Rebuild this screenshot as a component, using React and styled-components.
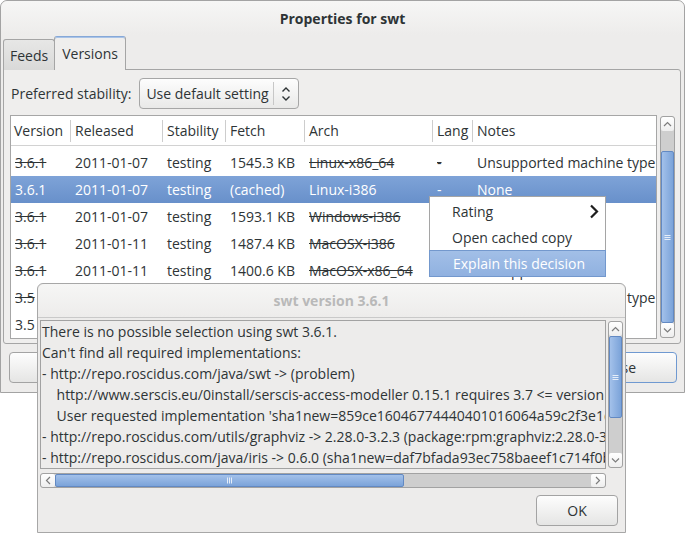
import React from 'react';
import styled, { createGlobalStyle } from 'styled-components';

const GlobalStyle = createGlobalStyle`
  html, body { margin: 0; padding: 0; background: #ffffff; }
  body {
    font-family: "Open Sans", "DejaVu Sans", sans-serif;
    font-size: 14px;
    color: #2e3436;
  }
  * { box-sizing: border-box; }
`;

const Desktop = styled.div`
  position: relative;
  width: 685px;
  height: 533px;
  overflow: hidden;
  background: #ffffff;
`;

/* ---------- main window ---------- */

const Window = styled.div`
  width: 685px;
  height: 393px;
  display: flex;
  flex-direction: column;
  background: #edeceb;
  border: 1px solid #a3a3a3;
  border-radius: 7px 7px 0 0;
`;

const TitleBar = styled.div`
  flex: none;
  height: 34px;
  display: flex;
  align-items: center;
  justify-content: center;
  font-weight: bold;
  color: ${(p) => (p.$inactive ? '#b9b9b9' : '#2e3436')};
  background: linear-gradient(#f6f6f5, #edeceb);
  border-radius: 7px 7px 0 0;
  border-bottom: ${(p) => (p.$inactive ? '1px solid #c9c9c9' : 'none')};
`;

const Notebook = styled.div`
  display: flex;
  flex-direction: column;
  margin: 0 3px 0 2px;
`;

const TabStrip = styled.div`
  display: flex;
  align-items: flex-end;
  height: 35px;
`;

const Tab = styled.div`
  position: relative;
  z-index: ${(p) => (p.$active ? 1 : 'auto')};
  height: ${(p) => (p.$active ? '34px' : '31px')};
  margin-left: ${(p) => (p.$active ? '-1px' : '0')};
  padding: 0 ${(p) => (p.$active ? '7px' : '6px')};
  display: flex;
  align-items: center;
  border: 1px solid #a5a5a5;
  border-bottom: none;
  border-radius: 3px 3px 0 0;
  background: ${(p) =>
    p.$active ? '#efeeed' : 'linear-gradient(#e7e7e6, #d9d9d8)'};
  border-top-color: ${(p) => (p.$active ? '#86a8d8' : '#a5a5a5')};
  box-shadow: ${(p) => (p.$active ? 'inset 0 1px 0 #a9c3e7' : 'none')};
`;

const Pane = styled.div`
  margin-top: -1px;
  height: 275px;
  display: flex;
  flex-direction: column;
  padding: 8px 5px 3px 6px;
  border: 1px solid #a5a5a5;
  border-radius: 0 3px 3px 3px;
  background: #efeeed;
`;

const StabilityRow = styled.div`
  display: flex;
  align-items: center;
  gap: 8px;
  height: 31px;
  padding-left: 1px;
`;

const Combo = styled.div`
  width: 160px;
  height: 31px;
  display: flex;
  align-items: center;
  border: 1px solid #a6a6a6;
  border-radius: 4px;
  background: linear-gradient(#fdfdfd, #e9e9e8);
`;

const ComboText = styled.span`
  flex: 1;
  padding-left: 6px;
  white-space: nowrap;
  overflow: hidden;
`;

const ComboSep = styled.span`
  width: 1px;
  height: 23px;
  background: #c7c7c7;
`;

const ComboArrows = styled.span`
  width: 24px;
  display: flex;
  align-items: center;
  justify-content: center;
`;

const TreeArea = styled.div`
  margin-top: 6px;
  height: 224px;
  display: flex;
  gap: 3px;
`;

const TreeBox = styled.div`
  flex: 1;
  border: 1px solid #a6a6a6;
  background: #ffffff;
  overflow: hidden;
`;

const GRID = '59px 92px 63px 79px 128px 40px 1fr';

const HeaderRow = styled.div`
  display: grid;
  grid-template-columns: ${GRID};
  height: 30px;
  padding: 4px 0 3px;
  border-bottom: 1px solid #d2d2d2;
`;

const HeaderCell = styled.div`
  line-height: 22px;
  padding-left: 4px;
  white-space: nowrap;
  overflow: hidden;
  border-left: 1px solid #cdcdcd;
  &:first-child { border-left: none; padding-left: 3px; }
`;

const Rows = styled.div`
  padding-top: 3px;
`;

const Row = styled.div`
  display: grid;
  grid-template-columns: ${GRID};
  height: 27px;
  align-items: center;
  color: ${(p) => (p.$selected ? '#ffffff' : '#2e3436')};
  background: ${(p) =>
    p.$selected ? 'linear-gradient(#7ea3d8, #6890ca)' : 'transparent'};
`;

const Cell = styled.div`
  padding-left: 5px;
  white-space: nowrap;
  overflow: hidden;
  text-decoration: ${(p) => (p.$strike ? 'line-through' : 'none')};
  &:first-child { padding-left: 4px; }
`;

const ButtonRow = styled.div`
  display: flex;
  justify-content: space-between;
  padding: 8px 7px 0 8px;
`;

const PushButton = styled.div`
  width: ${(p) => p.$width}px;
  height: 31px;
  display: flex;
  align-items: center;
  justify-content: center;
  border: 1px solid ${(p) => (p.$default ? '#6f99d1' : '#a3a3a3')};
  border-radius: 4px;
  background: linear-gradient(#fdfdfd, #e5e5e4);
`;

/* ---------- scrollbars ---------- */

const Track = styled.div`
  flex: none;
  display: flex;
  flex-direction: ${(p) => (p.$horizontal ? 'row' : 'column')};
  ${(p) => (p.$horizontal ? 'height: 15px;' : 'width: 15px; margin: 1px 0;')}
  border: 1px solid #a2a2a2;
  border-radius: 3px;
  background: #cecece;
  overflow: hidden;
`;

const Stepper = styled.div`
  flex: none;
  ${(p) => (p.$horizontal ? 'width: 14px;' : 'height: 14px;')}
  display: flex;
  align-items: center;
  justify-content: center;
  background: linear-gradient(#ffffff, #eeeeee);
  border-radius: 2px;
`;

const Trough = styled.div`
  flex: 1;
  display: flex;
  flex-direction: ${(p) => (p.$horizontal ? 'row' : 'column')};
`;

const Thumb = styled.div`
  flex: none;
  ${(p) =>
    p.$horizontal
      ? `margin-left: ${p.$offset}px; width: ${p.$size}px;`
      : `margin-top: ${p.$offset}px; height: ${p.$size}px;`}
  display: flex;
  align-items: center;
  justify-content: center;
  background: ${(p) =>
    p.$horizontal
      ? 'linear-gradient(#a3c1ea, #7ba3d9)'
      : 'linear-gradient(90deg, #a3c1ea, #7ba3d9)'};
  border: 1px solid #6289c3;
  border-radius: 2px;
`;

const arrowPoints = {
  up: '1,5 4.5,1.5 8,5',
  down: '1,1.5 4.5,5 8,1.5',
  left: '5,1 1.5,4.5 5,8',
  right: '1,1 4.5,4.5 1,8',
};

function Arrow({ dir }) {
  const vertical = dir === 'up' || dir === 'down';
  return (
    <svg width={vertical ? 9 : 6} height={vertical ? 6 : 9}>
      <polyline points={arrowPoints[dir]} fill="none" stroke="#7d7d7d" strokeWidth="1.2" />
    </svg>
  );
}

function Grip({ horizontal }) {
  return horizontal ? (
    <svg width="7" height="7">
      <path d="M1.5 0.5v6M3.5 0.5v6M5.5 0.5v6" stroke="#e6eef9" strokeWidth="1" />
    </svg>
  ) : (
    <svg width="7" height="7">
      <path d="M0.5 1.5h6M0.5 3.5h6M0.5 5.5h6" stroke="#e6eef9" strokeWidth="1" />
    </svg>
  );
}

function Scrollbar({ horizontal, offset, size }) {
  return (
    <Track $horizontal={horizontal}>
      <Stepper $horizontal={horizontal}>
        <Arrow dir={horizontal ? 'left' : 'up'} />
      </Stepper>
      <Trough $horizontal={horizontal}>
        <Thumb $horizontal={horizontal} $offset={offset} $size={size}>
          <Grip horizontal={horizontal} />
        </Thumb>
      </Trough>
      <Stepper $horizontal={horizontal}>
        <Arrow dir={horizontal ? 'right' : 'down'} />
      </Stepper>
    </Track>
  );
}

/* ---------- context menu ---------- */

const Menu = styled.div`
  position: absolute;
  left: 429px;
  top: 196px;
  width: 177px;
  padding-top: 1px;
  background: #ffffff;
  border: 1px solid #a5a5a5;
`;

const MenuItem = styled.div`
  height: 26px;
  display: flex;
  align-items: center;
  justify-content: space-between;
  padding: 0 6px 0 22px;
  color: ${(p) => (p.$hot ? '#ffffff' : '#2e3436')};
  ${(p) =>
    p.$hot &&
    `margin: 0 -1px -1px;
     padding-left: 23px;
     height: 27px;
     border: 1px solid #7398cd;
     background: linear-gradient(#a2bfe7, #90b1e0);`}
`;

/* ---------- dialog ---------- */

const Dialog = styled.div`
  position: absolute;
  left: 37px;
  top: 283px;
  width: 589px;
  height: 250px;
  display: flex;
  flex-direction: column;
  background: #edeceb;
  border: 1px solid #a7a7a7;
  border-radius: 6px 6px 0 0;
`;

const DialogBody = styled.div`
  display: grid;
  grid-template-columns: 566px 15px;
  grid-template-rows: 149px 15px;
  column-gap: 2px;
  row-gap: 4px;
  padding: 2px 0 0 2px;
`;

const TextBox = styled.div`
  border: 1px solid #a2a2a2;
  overflow: hidden;
  padding-left: 1px;
  line-height: 21px;
  white-space: pre;
`;

const DialogActions = styled.div`
  display: flex;
  justify-content: flex-end;
  padding: 7px 7px 0 0;
`;

/* ---------- data ---------- */

const columns = ['Version', 'Released', 'Stability', 'Fetch', 'Arch', 'Lang', 'Notes'];

const rows = [
  { v: '3.6.1', r: '2011-01-07', s: 'testing', f: '1545.3 KB', a: 'Linux-x86_64', n: 'Unsupported machine type', bad: true },
  { v: '3.6.1', r: '2011-01-07', s: 'testing', f: '(cached)', a: 'Linux-i386', n: 'None', selected: true },
  { v: '3.6.1', r: '2011-01-07', s: 'testing', f: '1593.1 KB', a: 'Windows-i386', n: 'Unsupported OS', bad: true },
  { v: '3.6.1', r: '2011-01-11', s: 'testing', f: '1487.4 KB', a: 'MacOSX-i386', n: 'Unsupported OS', bad: true },
  { v: '3.6.1', r: '2011-01-11', s: 'testing', f: '1400.6 KB', a: 'MacOSX-x86_64', n: 'Unsupported OS', bad: true },
  { v: '3.5', r: '2010-06-24', s: 'testing', f: '1502.8 KB', a: 'Linux-x86_64', n: 'Unsupported machine type', bad: true },
  { v: '3.5', r: '2010-06-24', s: 'testing', f: '1418.2 KB', a: 'Linux-i386', n: 'None' },
];

const explanation = [
  'There is no possible selection using swt 3.6.1.',
  "Can't find all required implementations:",
  '- http://repo.roscidus.com/java/swt -> (problem)',
  '    http://www.serscis.eu/0install/serscis-access-modeller 0.15.1 requires 3.7 <= version',
  "    User requested implementation 'sha1new=859ce16046774440401016064a59c2f3e1d0c8a7'",
  '- http://repo.roscidus.com/utils/graphviz -> 2.28.0-3.2.3 (package:rpm:graphviz:2.28.0-3.2.3:x86_64)',
  '- http://repo.roscidus.com/java/iris -> 0.6.0 (sha1new=daf7bfada93ec758baeef1c714f0b2a6c8e3d915)',
];

export default function App() {
  return (
    <>
      <GlobalStyle />
      <Desktop>
        <Window>
          <TitleBar>Properties for swt</TitleBar>
          <Notebook>
            <TabStrip>
              <Tab>Feeds</Tab>
              <Tab $active>Versions</Tab>
            </TabStrip>
            <Pane>
              <StabilityRow>
                <span>Preferred stability:</span>
                <Combo>
                  <ComboText>Use default setting</ComboText>
                  <ComboSep />
                  <ComboArrows>
                    <svg width="10" height="18">
                      <polyline points="1.5,6.5 5,3 8.5,6.5" fill="none" stroke="#2e3436" strokeWidth="1.4" />
                      <polyline points="1.5,11.5 5,15 8.5,11.5" fill="none" stroke="#2e3436" strokeWidth="1.4" />
                    </svg>
                  </ComboArrows>
                </Combo>
              </StabilityRow>
              <TreeArea>
                <TreeBox>
                  <HeaderRow>
                    {columns.map((c) => (
                      <HeaderCell key={c}>{c}</HeaderCell>
                    ))}
                  </HeaderRow>
                  <Rows>
                    {rows.map((row, i) => (
                      <Row key={i} $selected={row.selected}>
                        <Cell $strike={row.bad}>{row.v}</Cell>
                        <Cell>{row.r}</Cell>
                        <Cell>{row.s}</Cell>
                        <Cell>{row.f}</Cell>
                        <Cell $strike={row.bad}>{row.a}</Cell>
                        <Cell $strike={row.bad}>-</Cell>
                        <Cell>{row.n}</Cell>
                      </Row>
                    ))}
                  </Rows>
                </TreeBox>
                <Scrollbar offset={20} size={172} />
              </TreeArea>
            </Pane>
          </Notebook>
          <ButtonRow>
            <PushButton $width={90}>Help</PushButton>
            <PushButton $width={117} $default>Close</PushButton>
          </ButtonRow>
        </Window>

        <Menu>
          <MenuItem>
            Rating
            <svg width="10" height="15">
              <polyline points="2,1.5 8,7.5 2,13.5" fill="none" stroke="#1e1e1e" strokeWidth="2.2" />
            </svg>
          </MenuItem>
          <MenuItem>Open cached copy</MenuItem>
          <MenuItem $hot>Explain this decision</MenuItem>
        </Menu>

        <Dialog>
          <TitleBar $inactive>swt version 3.6.1</TitleBar>
          <DialogBody>
            <TextBox>
              {explanation.map((line, i) => (
                <div key={i}>{line}</div>
              ))}
            </TextBox>
            <Scrollbar offset={0} size={82} />
            <Scrollbar horizontal offset={0} size={349} />
          </DialogBody>
          <DialogActions>
            <PushButton $width={82}>OK</PushButton>
          </DialogActions>
        </Dialog>
      </Desktop>
    </>
  );
}
